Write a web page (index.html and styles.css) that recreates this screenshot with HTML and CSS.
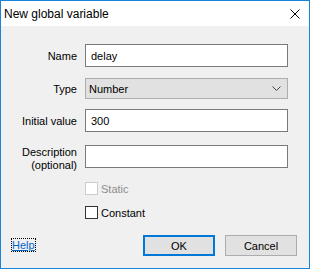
FILE: index.html
```html
<!DOCTYPE html>
<html lang="en">
<head>
<meta charset="UTF-8" />
<title>New global variable</title>
<link rel="stylesheet" href="styles.css">
</head>
<body>

<div class="window">
  <div class="titlebar">
    <span class="title">New global variable</span>
    <svg class="close" width="10" height="10" viewBox="0 0 10 10">
      <path d="M0.5 0.5 L9.5 9.5 M9.5 0.5 L0.5 9.5" stroke="#000" stroke-width="1" fill="none" />
    </svg>
  </div>

  <div class="form">
    <div class="row row-name">
      <label>Name</label>
      <div class="field">delay</div>
    </div>
    <div class="row row-type">
      <label>Type</label>
      <div class="field select">
        <span>Number</span>
        <svg width="9" height="5" viewBox="0 0 9 5">
          <path d="M0.5 0.5 L4.5 4.5 L8.5 0.5" stroke="#444" stroke-width="1" fill="none" />
        </svg>
      </div>
    </div>
    <div class="row row-initial">
      <label>Initial value</label>
      <div class="field">300</div>
    </div>
    <div class="row row-desc">
      <label class="two-lines">Description<br>(optional)</label>
      <div class="field"></div>
    </div>
    <div class="row row-static">
      <span></span>
      <div class="check disabled"><span class="box"></span>Static</div>
    </div>
    <div class="row row-constant">
      <span></span>
      <div class="check"><span class="box"></span>Constant</div>
    </div>
  </div>

  <div class="footer">
    <a class="help">Help</a>
    <div class="buttons">
      <button class="btn default">OK</button>
      <button class="btn">Cancel</button>
    </div>
  </div>
</div>

</body>
</html>
```

FILE: styles.css
```css
  body {
    margin: 0;
    background: #f0f0f0;
    font-family: "Liberation Sans", Arial, sans-serif;
    font-size: 11px;
    color: #000;
  }
  .window {
    width: 310px;
    height: 269px;
    box-sizing: border-box;
    border: 1px solid #1883d7;
    background: #f0f0f0;
    display: flex;
    flex-direction: column;
  }
  .titlebar {
    height: 25px;
    background: #fff;
    display: flex;
    align-items: center;
    justify-content: space-between;
    padding: 0 9px 0 3px;
  }
  .title {
    font-size: 12px;
  }
  .close {
    margin-top: 1px;
  }

  .form {
    padding-top: 18px;
  }
  .row {
    display: grid;
    grid-template-columns: 76px 203px;
    column-gap: 8px;
    align-items: center;
  }
  .row label {
    text-align: right;
  }
  .row-type { margin-top: 11px; }
  .row-initial { margin-top: 10px; }
  .row-desc { margin-top: 13px; }
  .row-static { margin-top: 14px; }
  .row-constant { margin-top: 11px; }

  /* le label depasse sous le champ sans agrandir la ligne */
  .two-lines {
    align-self: start;
    line-height: 13px;
    padding-top: 1px;
    margin-bottom: -4px;
  }

  .field {
    height: 23px;
    box-sizing: border-box;
    border: 1px solid #7a7a7a;
    background: #fff;
    padding: 0 5px;
    display: flex;
    align-items: center;
  }
  .select {
    height: 21px;
    border-color: #adadad;
    background: #e1e1e1;
    padding: 0 6px 0 3px;
    justify-content: space-between;
  }

  .check {
    display: flex;
    align-items: center;
    height: 13px;
  }
  .box {
    width: 13px;
    height: 13px;
    box-sizing: border-box;
    border: 1px solid #333;
    background: #fff;
    margin-right: 3px;
  }
  .check.disabled {
    color: #8d8d8d;
  }
  .check.disabled .box {
    border-color: #cccccc;
  }

  .footer {
    margin-top: auto;
    display: flex;
    justify-content: space-between;
    align-items: center;
    padding: 0 12px 12px 11px;
  }
  .help {
    color: #0066cc;
    text-decoration: underline;
    outline: 1px dotted #000;
    line-height: 12px;
    margin-top: -2px;
  }
  .buttons {
    display: flex;
    gap: 10px;
  }
  .btn {
    width: 72px;
    height: 21px;
    box-sizing: border-box;
    border: 1px solid #adadad;
    background: #e1e1e1;
    font-family: "Liberation Sans", Arial, sans-serif;
    font-size: 11px;
    color: #000;
    padding: 0;
  }
  .btn.default {
    border: 2px solid #0078d7;
  }
```
